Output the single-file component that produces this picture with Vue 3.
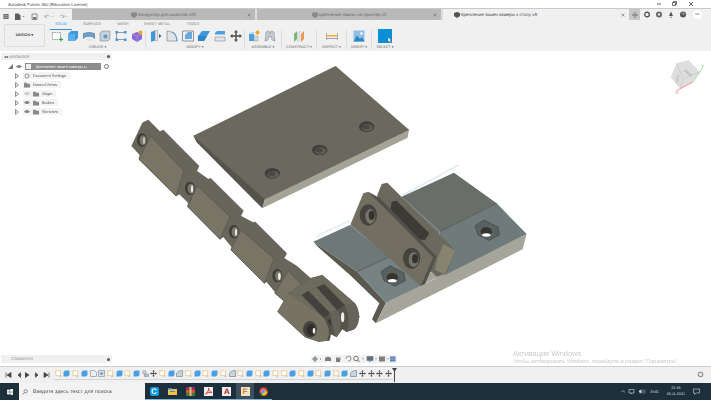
<template>
  <div class="app">
    <svg class="defs" width="0" height="0">
      <defs>
        <symbol id="sketch" viewBox="0 0 12 12">
          <path d="M1.500 2.500h8v7h-8z" fill="#fff" stroke="#777" stroke-width=".7" stroke-dasharray="1.500 .7" />
          <path d="M8 9.500h4M10 7.500v4" stroke="#2aa84a" stroke-width="1.200" />
        </symbol>
        <symbol id="extrude" viewBox="0 0 12 12">
          <path d="M1 4l3-3h7v7l-3 3H1z" fill="#3f97dc" />
          <path d="M1 4h7v7H1z" fill="#5bb0ec" />
        </symbol>
        <symbol id="revolve" viewBox="0 0 12 12">
          <path d="M0 4c2-2 10-2 12 0v5c-1-2-3-2.500-6-2.500S1 7 0 9z" fill="#6c9fcb" stroke="#4a6c8c" stroke-width=".5" />
          <ellipse cx="6" cy="9.500" rx="3.500" ry="1.500" fill="#dfe6ec" />
        </symbol>
        <symbol id="hole" viewBox="0 0 12 12">
          <path d="M1 3l2-2h8v8l-2 2H1z" fill="#c5ccd2" stroke="#7b858d" stroke-width=".5" />
          <circle cx="6.500" cy="6.500" r="2.700" fill="#6a9bc4" stroke="#fff" stroke-width=".6" />
        </symbol>
        <symbol id="lines" viewBox="0 0 12 12">
          <path d="M1.500 2.500h9M1.500 2.500v8M10.500 9.500h-8" fill="none" stroke="#55626c" stroke-width=".6" />
          <rect x=".5" y="1" width="2.500" height="2.500" fill="#3f97dc" />
          <rect x="9" y="1" width="2.500" height="2.500" fill="#3f97dc" />
          <rect x=".5" y="8.500" width="2.500" height="2.500" fill="#3f97dc" />
          <rect x="9" y="8.500" width="2.500" height="2.500" fill="#3f97dc" />
        </symbol>
        <symbol id="purple" viewBox="0 0 12 12">
          <path d="M1 4l5-2 5 2v5l-5 3-5-3z" fill="#8c6bd6" />
          <path d="M1 4l5 2 5-2M6 6v6" fill="none" stroke="#b7a2ea" stroke-width=".5" />
          <circle cx="9.500" cy="2.500" r="2" fill="#f3a51f" />
        </symbol>
        <symbol id="press" viewBox="0 0 12 12">
          <path d="M1 2l4-1.500v10L1 12z" fill="#3f97dc" />
          <path d="M5 .5h2.500v10H5z" fill="#dfe6ec" stroke="#6d7a84" stroke-width=".4" />
          <path d="M9 4l2.500 2L9 8z" fill="#4a5660" />
        </symbol>
        <symbol id="fillet" viewBox="0 0 12 12">
          <path d="M1 11V1c5 0 10 4 10 10z" fill="#dfe4e8" stroke="#6d7a84" stroke-width=".6" />
          <path d="M6 1.800c3 1 4.500 4 5 9.200" fill="none" stroke="#3f97dc" stroke-width=".9" />
        </symbol>
        <symbol id="chamfer" viewBox="0 0 12 12">
          <path d="M.500 1h11v10H.500z" fill="#eef1f3" stroke="#65717a" stroke-width=".7" />
          <path d="M3 9V5l3-3h4v7z" fill="#6aa9dc" />
        </symbol>
        <symbol id="shell" viewBox="0 0 12 12">
          <path d="M0 6l4-5h8l-3 5-3 5H0z" fill="#3f97dc" />
          <path d="M0 6h9l-3 5H0z" fill="#2f84c8" />
        </symbol>
        <symbol id="combine" viewBox="0 0 12 12">
          <path d="M1 3l2-2h8v3.500H1z" fill="#4aa0e0" />
          <path d="M1 7h10v4H1z" fill="#dfe4e8" stroke="#6d7a84" stroke-width=".5" />
        </symbol>
        <symbol id="move" viewBox="0 0 12 12">
          <path d="M6 0l2 2.500H6.700v2.800h2.800V4L12 6 9.500 8V6.700H6.700v2.800H8L6 12 4 9.500h1.300V6.700H2.500V8L0 6l2.500-2v1.300h2.800V2.500H4z" fill="#4c4c4c" />
        </symbol>
        <symbol id="assemble" viewBox="0 0 12 12">
          <path d="M1 4h5v7H1z" fill="#4aa0e0" />
          <path d="M6 6h4v5H6z" fill="#d4dbe0" stroke="#7c8890" stroke-width=".4" />
          <path d="M1 4l2-2h3v2z" fill="#bcd8ee" />
          <circle cx="9.500" cy="2.500" r="2" fill="#f3a51f" />
        </symbol>
        <symbol id="joint" viewBox="0 0 12 12">
          <path d="M1 11l1-9 3-1 1 3 1-3 3 1 1 9-3-1-1-4-1 1-1-1-1 4z" fill="#c3cbd2" stroke="#77838c" stroke-width=".5" />
        </symbol>
        <symbol id="construct" viewBox="0 0 12 12">
          <path d="M1 4l3-3v8l-3 3z" fill="#79b873" />
          <path d="M4.500 3l2.500-2v9l-2.500 2z" fill="#e4e8ea" stroke="#99a" stroke-width=".3" />
          <path d="M8 4l3-3v8l-3 3z" fill="#ea9a53" />
        </symbol>
        <symbol id="inspect" viewBox="0 0 12 12">
          <path d="M.500 3v7M11.500 3v7" stroke="#7a7a7a" stroke-width=".6" />
          <path d="M1 5h10v1.500H1z" fill="#f4ae3a" />
          <path d="M1 8.500h10" stroke="#555" stroke-width=".5" />
        </symbol>
        <symbol id="insert" viewBox="0 0 12 12">
          <path d="M.500.500h11v11H.500z" fill="#8ec0e6" />
          <path d="M.500 11.500l3.500-6 3 3.500 2-2 2.500 4.500z" fill="#2f84c8" />
          <circle cx="8.500" cy="3.500" r="1.200" fill="#fff" />
        </symbol>
        <symbol id="sketchStep" viewBox="0 0 7 7">
          <path d="M.800.800h4.800v4.800H.800z" fill="#fff" stroke="#e7a74a" stroke-width=".7" stroke-dasharray="1.400 .5" />
          <path d="M4.500 6.500l2-.5" stroke="#7fa4c0" stroke-width=".6" />
        </symbol>
        <symbol id="boxStep" viewBox="0 0 7 7">
          <path d="M.500 2l1.500-1.500h4.500v4.500L5 6.500H.500z" fill="#4a9fe0" />
        </symbol>
        <symbol id="cutStep" viewBox="0 0 7 7">
          <path d="M.500.500h4l2 2v4h-6z" fill="#eaf0f4" stroke="#7b8790" stroke-width=".6" />
        </symbol>
        <symbol id="holeStep" viewBox="0 0 7 7">
          <path d="M.500.500h6v6h-6z" fill="#dde3e8" stroke="#7b8790" stroke-width=".6" />
          <circle cx="3.500" cy="3.500" r="1.600" fill="#7aa6c8" />
        </symbol>
        <symbol id="groupStep" viewBox="0 0 7 7">
          <circle cx="2.300" cy="2.300" r="1.800" fill="#cfd6dc" stroke="#78838c" stroke-width=".5" />
          <path d="M2.500 4h4v2.600h-4z" fill="#a9c5da" stroke="#78838c" stroke-width=".5" />
        </symbol>
        <symbol id="filletStep" viewBox="0 0 7 7">
          <path d="M.500 6.500V3C2 1.200 4 .500 6.500.500v6z" fill="#c8d4dc" stroke="#6c7b86" stroke-width=".6" />
        </symbol>
      </defs>
    </svg>

    <header class="titlebar">
      <span class="title">Autodesk Fusion 360 (Education License)</span>
      <svg class="win-btns" width="44" height="8" viewBox="0 0 44 8">
        <path d="M0 4h4" stroke="#333" fill="none" stroke-width=".8" />
        <path d="M15.500 2.500h3v3h-3zM16.500 2.500v-1h3v3h-1" stroke="#333" fill="none" stroke-width=".7" />
        <path d="M32 2l4 4M36 2l-4 4" stroke="#333" fill="none" stroke-width=".8" />
      </svg>
    </header>

    <div class="tabrow">
      <div class="quick">
        <svg width="72" height="11" viewBox="0 0 72 11">
          <path d="M3.500 3h5v5h-5z" fill="#4e4e4e" />
          <path d="M5.200 3v5M6.900 3v5M3.500 4.700h5M3.500 6.400h5" stroke="#e8e8e8" stroke-width=".4" />
          <path d="M15 2.500h3.500l2 2V9H15z" fill="#5c5c5c" />
          <path d="M22.500 5l1 1 1-1z" fill="#666" />
          <path d="M32 3h5v5.500h-5z" fill="none" stroke="#777" stroke-width=".8" />
          <path d="M33 6h3v2.500h-3z" fill="#777" />
          <path d="M45 6c1-2.500 3.500-2.500 4.500-.5M45 4v2.300h2.200" fill="none" stroke="#9a9a9a" stroke-width=".7" />
          <path d="M51.500 5l1 1 1-1z" fill="#aaa" />
          <path d="M64 6c-1-2.500-3.500-2.500-4.500-.5M64 4v2.300h-2.200" fill="none" stroke="#9a9a9a" stroke-width=".7" />
          <path d="M65.500 5l1 1 1-1z" fill="#aaa" />
        </svg>
      </div>
      <div v-for="tab in tabs" :key="tab.name" class="tab" :class="{ active: tab.active }" :style="{ width: tab.w + 'px' }">
        <svg width="6" height="6" viewBox="0 0 6 6"><path d="M0 1l3-1 3 1v3l-3 2-3-2z" :fill="tab.active ? '#555' : '#8a8a8a'" /></svg>
        <span>{{ tab.name }}</span>
        <svg class="tab-x" width="4" height="4" viewBox="0 0 4 4"><path d="M.5.5l3 3M3.500.5l-3 3" stroke="#777" stroke-width=".7" /></svg>
      </div>
      <div class="tab-tools">
        <div class="plus">
          <svg width="6" height="6" viewBox="0 0 6 6"><path d="M3 0v6M0 3h6" stroke="#888" stroke-width="1.300" /></svg>
        </div>
        <svg width="50" height="11" viewBox="0 0 50 11">
          <circle cx="7" cy="5.500" r="2.300" fill="none" stroke="#444" stroke-width="1.200" />
          <circle cx="19" cy="5.500" r="3" fill="#666" />
          <circle cx="19" cy="5.500" r="1.200" fill="#ddd" />
          <path d="M31 2.500l2 4.500h-4zM30.300 7.700h1.400v1h-1.400z" fill="#555" />
          <circle cx="43" cy="5.500" r="3" fill="#555" />
          <path d="M42 4.700c.3-1 2-1 2 0 0 .7-1 .7-1 1.500" fill="none" stroke="#eee" stroke-width=".6" />
        </svg>
        <span class="avatar">MK</span>
      </div>
    </div>

    <div class="ribbon">
      <div class="design">DESIGN ▾</div>
      <div class="ribbon-main">
        <div class="ribbon-tabs">
          <span v-for="(t, i) in ribbonTabs" :key="t.name" class="rtab" :class="{ on: i === 0 }" :style="{ width: t.w + 'px' }">{{ t.name }}</span>
        </div>
        <div class="groups">
          <div v-for="g in groups" :key="g.label" class="group" :style="{ width: g.w + 'px' }">
            <div class="icons" :style="{ paddingLeft: g.pad + 'px' }">
              <svg v-for="ic in g.icons" :key="ic" width="12" height="12"><use :href="'#' + ic" /></svg>
              <div v-if="g.select" class="select-tile">
                <svg width="5" height="6" viewBox="0 0 5 6"><path d="M1 0l3.500 3.500H3l1 2-1 .4-1-2-1 1z" fill="#fff" stroke="#333" stroke-width=".3" /></svg>
              </div>
            </div>
            <span class="group-label">{{ g.label }} ▾</span>
          </div>
        </div>
      </div>
    </div>

    <main class="viewport">
      <svg class="model" width="711" height="400" viewBox="0 0 711 400">
        <!-- top plate, coords taken from a 3x crop -->
        <g transform="translate(185 65) scale(.3333)">
          <path d="M25 212L452 3 672 194 240 402z" fill="#6b685d" />
          <path d="M25 212L240 402 232 430 35 232z" fill="#56534a" />
          <path d="M240 402L672 194 668 218 232 430z" fill="#a3a396" />
          <path d="M25 212L240 402 672 194" fill="none" stroke="#45433c" stroke-width="1.500" />
          <g v-for="h in plateHoles" :key="h.x">
            <ellipse :cx="h.x" :cy="h.y" rx="23" ry="16" fill="#3f3d38" />
            <ellipse :cx="h.x + 2" :cy="h.y + 3" rx="17" ry="11" fill="#5f5d54" />
            <ellipse :cx="h.x - 2" :cy="h.y + 1" rx="11" ry="7" fill="#494740" />
          </g>
        </g>

        <!-- chain of links -->
        <g transform="translate(120 110) scale(.3333)">
          <path d="M35 108L68 38 85 30 120 65 130 60 237 168 230 183 265 208 272 205 370 302 362 318 400 338 405 335 500 430 492 445 530 468 600 530 560 545 495 575 465 550 465 545 440 515 433 520 333 420 335 410 310 380 300 388 203 290 205 278 178 252 168 258 57 148 60 135z" fill="#68655a" stroke="#4c4a43" stroke-width="1.500" />
          <g stroke="#4c4a43" stroke-width="1.500">
            <path d="M57 148L92 78 192 183 168 258z" fill="#797566" />
            <path d="M203 290L232 228 330 320 300 388z" fill="#797566" />
            <path d="M333 420L363 360 462 445 433 520z" fill="#797566" />
            <path d="M465 550L505 482 545 525 495 575z" fill="#797566" />
          </g>
          <g v-for="h in chainHoles" :key="h.x">
            <ellipse :cx="h.x" :cy="h.y" rx="15" ry="20" fill="#3e3c37" />
            <ellipse :cx="h.x + 3" :cy="h.y + 1" rx="10" ry="15" fill="#7a786d" />
            <ellipse :cx="h.x + 6" :cy="h.y + 2" :rx="h.gap" ry="11" fill="#f0f0ea" />
          </g>
        </g>

        <!-- clip end -->
        <g transform="translate(265 260) scale(.3333)">
          <path d="M37 155L70 100 135 55 172 45 270 130 284 170 268 208 245 216 232 208 215 232 196 222 190 242 160 245 120 232z" fill="#55534b" />
          <path d="M70 100L110 105 178 175 120 150z" fill="#6d6a5e" />
          <path d="M110 105L130 92 195 158 178 175z" fill="#43413b" />
          <path d="M130 92L155 82 216 150 195 158z" fill="#6d6a5e" />
          <path d="M155 82L178 72 240 135 216 150z" fill="#43413b" />
          <path d="M178 72L172 45 270 130 240 135z" fill="#6d6a5e" />
          <path d="M70 100L135 55 172 45 178 72 130 92 110 105z" fill="#6d6a5e" />
          <path d="M195 158L216 150C232 170 232 205 215 232 205 222 205 195 195 158z" fill="#66635a" />
          <path d="M240 135L270 130C287 150 287 195 268 208L245 216C255 190 250 160 240 135z" fill="#66635a" />
          <ellipse cx="233" cy="172" rx="5" ry="15" fill="#f0f0ea" />
          <ellipse cx="193" cy="190" rx="4" ry="13" fill="#2e2d29" />
          <path d="M37 155L70 100 178 175 195 215 190 242 160 245 120 232z" fill="#777364" />
          <ellipse cx="135" cy="208" rx="21" ry="25" fill="#45433d" />
          <ellipse cx="138" cy="210" rx="13" ry="17" fill="#2e2d29" />
          <ellipse cx="147" cy="212" rx="4" ry="9" fill="#eeeee8" />
          <path d="M178 170C195 190 200 215 190 242" fill="none" stroke="#4f4d45" stroke-width="6" />
        </g>

        <!-- bracket -->
        <g transform="translate(300 160) scale(.3333)">
          <path d="M50 228L150 182M305 107L475 16" stroke="#dfeef8" stroke-width="5" fill="none" />
          <path d="M40 245L172 335 258 428 228 490 216 478 238 430 150 345 55 262z" fill="#5a584f" />
          <path d="M258 428L680 222 668 268 228 490z" fill="#a5a599" />
          <path d="M150 195L305 110 420 215 385 335 270 290z" fill="#6f7878" />
          <path d="M305 110L462 38 590 130 420 215z" fill="#6a6e69" />
          <path d="M420 215L590 130 680 222 435 345 385 335z" fill="#6f7b7b" />
          <path d="M40 245L150 195 270 290 172 335z" fill="#6f7878" />
          <path d="M172 335L270 290 385 335 362 378 258 428z" fill="#778383" />
          <path d="M362 378L385 335 435 345 400 358z" fill="#a5a599" />
          <path d="M590 130L420 215M172 335L270 290" stroke="#3f403c" stroke-width="2" fill="none" />

          <path d="M232 105L245 72 262 68 467 272 440 340 410 350 232 170z" fill="#6b685d" />
          <path d="M412 295L430 252 467 272 435 343 405 330z" fill="#86836f" />
          <path d="M275 125L290 122 388 220 375 240 345 238 270 160z" fill="#3d3b36" />
          <path d="M205 95L240 115 410 290 375 372 362 378z" fill="#52504a" />
          <path d="M152 192L190 100 205 95 400 292 362 378z" fill="#726e62" />

          <g v-for="h in bracketHoles" :key="h.x">
            <ellipse :cx="h.x" :cy="h.y" rx="26" ry="32" fill="#45433d" />
            <ellipse :cx="h.x + 6" :cy="h.y + 4" rx="15" ry="22" fill="#77746a" />
            <ellipse :cx="h.x + 10" :cy="h.y + 1" rx="9" ry="14" fill="#33322e" />
          </g>

          <g v-for="n in nuts" :key="n.x" :transform="`translate(${n.x} ${n.y})`">
            <path d="M-37-12L-10-30 32-9 36 15 5 31-28 15z" fill="#596160" stroke="#3e4240" stroke-width="2" />
            <ellipse cx="-3" cy="5" rx="17" ry="13" fill="#35352f" />
            <ellipse cx="-3" cy="15" rx="13" ry="5" fill="#fff" />
          </g>
        </g>

        <!-- view cube -->
        <g transform="translate(480 0) scale(.3333)">
          <path d="M572 232L590 190 625 180 660 215 635 250 600 265z" fill="#dedede" />
          <path d="M590 190L610 238 660 215M610 238L600 265" fill="none" stroke="#c6c6c6" stroke-width="2" />
          <path d="M590 272L640 245" stroke="#ef8f8f" stroke-width="3" />
          <path d="M640 245L668 203" stroke="#9fe39f" stroke-width="3" />
          <text x="586" y="282" class="axis axis-x">X</text>
          <text x="663" y="204" class="axis axis-y">Y</text>
          <text transform="translate(612 212) rotate(42)" class="cube-text">BACK</text>
          <text transform="translate(592 248) rotate(-70)" class="cube-text">LEFT</text>
        </g>
      </svg>

      <aside class="browser">
        <div class="panel-head">
          <span class="panel-title"><b>◂◂</b> BROWSER</span>
          <span class="dot"></span>
        </div>
        <div class="root-row">
          <svg width="5" height="5" viewBox="0 0 5 5"><path d="M0 5L5 0v5z" fill="#777" /></svg>
          <svg width="6" height="5" viewBox="0 0 7 5"><path d="M0 2.500C2 0 5 0 7 2.500 5 5 2 5 0 2.500z" fill="#888" /></svg>
          <span class="root-name"><i class="doc"></i>Крепление экшен камеры к...</span>
          <span class="radio"></span>
        </div>
        <div v-for="n in nodes" :key="n.name" class="node">
          <svg width="4" height="6" viewBox="0 0 4 6"><path d="M.5.5L3.500 3 .5 5.500z" fill="#e6e6e6" stroke="#555" stroke-width=".6" /></svg>
          <div class="node-body">
            <svg v-if="n.eye" width="6" height="5" viewBox="0 0 7 5"><path d="M0 2.500C2 0 5 0 7 2.500 5 5 2 5 0 2.500z" :fill="n.dim ? '#ccc' : '#8a8a8a'" /></svg>
            <svg width="6" height="6" viewBox="0 0 7 6">
              <circle v-if="n.gear" cx="3.500" cy="3" r="2.200" fill="none" stroke="#888" stroke-width="1.400" stroke-dasharray="1.100 .4" />
              <path v-else d="M0 .5h3l1 1h3V6H0z" fill="#8a8a8a" />
            </svg>
            <span>{{ n.name }}</span>
          </div>
        </div>
      </aside>

      <div class="watermark">
        <div class="wm-title">Активация Windows</div>
        <div class="wm-sub">Чтобы активировать Windows, перейдите в раздел "Параметры".</div>
      </div>

      <div class="comments">
        <span class="panel-title">COMMENTS</span>
        <span class="dot"></span>
      </div>

      <div class="nav-tools">
        <svg width="86" height="8" viewBox="0 0 86 8">
          <path d="M4 1l3 3-3 3-3-3z" fill="#8a9aa6" />
          <path d="M9 4h1" stroke="#666" />
          <path d="M14 3l3-1.500L20 3v3h-6z" fill="#7d7d7d" />
          <path d="M25 7V2.500h1V4l.8-2h1v2l1-1.500h.8L29 7z" fill="#7d7d7d" />
          <path d="M35 4a2.500 2.500 0 1 1 2 2" fill="none" stroke="#777" stroke-width=".8" />
          <circle cx="45" cy="3.500" r="2.300" fill="none" stroke="#666" stroke-width=".9" />
          <path d="M46.500 5l2 2" stroke="#666" />
          <path d="M51 3.500l1 1 1-1z" fill="#666" />
          <path d="M56 1.500h6v4h-6zM58 6.500h2" fill="#5d7286" stroke="#5d7286" stroke-width=".6" />
          <path d="M64 3.500l1 1 1-1z" fill="#666" />
          <path d="M68 1.500h6v5h-6z" fill="#808080" />
          <path d="M76 3.500l1 1 1-1z" fill="#666" />
          <path d="M79 1.500h5.500v5H79z" fill="#5b83b5" />
          <path d="M79 4h5.500" stroke="#dde" stroke-width=".5" />
        </svg>
      </div>
    </main>

    <div class="timeline">
      <svg class="play" width="48" height="8" viewBox="0 0 48 8">
        <path d="M3 1.500v5M8 1.500l-4 2.500 4 2.500z" fill="#444" stroke="#444" stroke-width=".7" />
        <path d="M15 4l2.500-2.500v5zM15.500 4h3" fill="#444" stroke="#444" stroke-width=".6" />
        <path d="M22 1v6l4.500-3z" fill="#444" />
        <path d="M35 4l-2.500-2.500v5zM34.500 4h-3" fill="#444" stroke="#444" stroke-width=".6" />
        <path d="M41 1.500l4 2.500-4 2.500zM46 1.500v5" fill="#444" stroke="#444" stroke-width=".7" />
      </svg>
      <div class="steps">
        <div v-for="(s, i) in steps" :key="i" class="step">
          <svg width="7" height="7"><use :href="'#' + s" /></svg>
        </div>
      </div>
      <div class="marker">
        <svg width="5" height="4" viewBox="0 0 5 4"><path d="M0 0h5L2.500 4z" fill="#444" /></svg>
      </div>
      <svg class="tl-gear" width="7" height="7" viewBox="0 0 7 7"><circle cx="3.500" cy="3.500" r="2.200" fill="none" stroke="#777" stroke-width="1.300" stroke-dasharray="1.100 .4" /></svg>
    </div>

    <footer class="taskbar">
      <div class="start">
        <svg width="6" height="6" viewBox="0 0 6 6"><path d="M0 .8l2.700-.4v2.400H0zM3.100.3L6 0v2.800H3.100zM0 3.200h2.700v2.400L0 5.200zM3.100 3.200H6V6l-2.900-.4z" fill="#fff" /></svg>
      </div>
      <div class="search">
        <svg width="6" height="6" viewBox="0 0 6 6"><circle cx="3.700" cy="2.300" r="1.700" fill="none" stroke="#555" stroke-width=".6" /><path d="M2.500 3.500L.5 5.500" stroke="#555" stroke-width=".7" /></svg>
        <span>Введите здесь текст для поиска</span>
      </div>
      <div class="apps">
        <div class="app-ic"><span class="tile tile-c">C</span></div>
        <div class="app-ic">
          <svg width="9" height="9" viewBox="0 0 9 9"><path d="M0 2h9v6H0z" fill="#f0c04a" /><path d="M0 1h4v1.500H0zM2 4h5v1H2z" fill="#2d8fd6" /></svg>
        </div>
        <div class="app-ic">
          <svg width="9" height="9" viewBox="0 0 9 9"><path d="M0 0h9v3H0z" fill="#8b2d78" /><path d="M0 3h9v3H0z" fill="#d6552b" /><path d="M0 6h9v3H0z" fill="#3a7a3c" /><path d="M3.500 0h2v9h-2z" fill="#d9c27a" /></svg>
        </div>
        <div class="app-ic">
          <svg width="9" height="9" viewBox="0 0 9 9"><path d="M0 0h9v9H0z" fill="#eee" /><path d="M1.500 7C4 5 5 3 4.500 1c0 2 1.500 4 3.500 4.500C6 5 3.500 5.500 1.500 7z" fill="none" stroke="#d0312d" stroke-width=".9" /></svg>
        </div>
        <div class="app-ic"><span class="tile tile-a">A</span></div>
        <div class="app-ic lit"><span class="tile tile-f">F</span></div>
        <div class="app-ic">
          <svg width="9" height="9" viewBox="0 0 9 9">
            <circle cx="4.500" cy="4.500" r="4.200" fill="#db4437" />
            <path d="M4.500 4.500L1 7 .3 4.500a4.200 4.200 0 0 0 4.200 4.200z" fill="#0f9d58" />
            <path d="M4.500 4.500h4.200a4.200 4.200 0 0 1-4.200 4.200L2.800 8z" fill="#f4b400" />
            <circle cx="4.500" cy="4.500" r="2" fill="#fff" />
            <circle cx="4.500" cy="4.500" r="1.500" fill="#4285f4" />
          </svg>
        </div>
      </div>
      <div class="tray">
        <svg width="26" height="7" viewBox="0 0 26 7">
          <path d="M0 4.500l2-2 2 2" fill="none" stroke="#ddd" stroke-width=".6" />
          <path d="M8 1.500h5v3.500H8zM10.500 5v1.200" fill="none" stroke="#ddd" stroke-width=".6" />
          <path d="M18 2.500h1l1.500-1.300v4.600L19 4.500h-1z" fill="#ddd" />
          <path d="M21.500 2c.7.800.7 2.200 0 3M23 1.200c1.200 1.400 1.200 3.200 0 4.600" fill="none" stroke="#ddd" stroke-width=".5" />
        </svg>
        <span class="lang">ENG</span>
        <div class="clock"><div>22:48</div><div>05.11.2021</div></div>
        <svg width="7" height="7" viewBox="0 0 7 7"><path d="M.5 1h6v4H3L1.500 6.300V5h-1z" fill="none" stroke="#ddd" stroke-width=".6" /></svg>
      </div>
    </footer>
  </div>
</template>

<script setup>
const tabs = [
  { name: 'Кондуктор для шкантов v20', w: 185 },
  { name: 'крепление лампы на принтер v2', w: 186 },
  { name: 'Крепление экшен камеры к столу v9', w: 186, active: true }
]
const ribbonTabs = [
  { name: 'SOLID', w: 22 },
  { name: 'SURFACE', w: 40 },
  { name: 'MESH', w: 22 },
  { name: 'SHEET METAL', w: 46 },
  { name: 'TOOLS', w: 26 }
]
const groups = [
  { label: 'CREATE', w: 96, pad: 1, icons: ['sketch', 'extrude', 'revolve', 'hole', 'lines', 'purple'] },
  { label: 'MODIFY', w: 99, pad: 4, icons: ['press', 'fillet', 'chamfer', 'shell', 'combine', 'move'] },
  { label: 'ASSEMBLE', w: 37, pad: 3, icons: ['assemble', 'joint'] },
  { label: 'CONSTRUCT', w: 35, pad: 0, icons: ['construct'] },
  { label: 'INSPECT', w: 30, pad: 0, icons: ['inspect'] },
  { label: 'INSERT', w: 25, pad: 0, icons: ['insert'] },
  { label: 'SELECT', w: 26, pad: 0, icons: [], select: true }
]
const nodes = [
  { name: 'Document Settings', gear: true },
  { name: 'Named Views' },
  { name: 'Origin', eye: true, dim: true },
  { name: 'Bodies', eye: true },
  { name: 'Sketches', eye: true }
]
const plateHoles = [
  { x: 262, y: 325 },
  { x: 404, y: 255 },
  { x: 545, y: 185 }
]
const chainHoles = [
  { x: 66, y: 90, gap: 2 },
  { x: 210, y: 235, gap: 3 },
  { x: 342, y: 365, gap: 3 },
  { x: 472, y: 497, gap: 4 }
]
const bracketHoles = [
  { x: 205, y: 165 },
  { x: 335, y: 295 }
]
const nuts = [
  { x: 280, y: 347 },
  { x: 562, y: 210 }
]
const key = {
  s: 'sketchStep', b: 'boxStep', c: 'cutStep', h: 'holeStep',
  g: 'groupStep', m: 'move', f: 'filletStep'
}
const steps = 'sbsbchsbsbgmsbfsbsbsfsbsbssbsbsbsbfmmmm'.split('').map(c => key[c])
</script>

<style>
html, body { margin: 0; background: #fff; }
</style>

<style scoped>
.app {
  width: 711px;
  height: 400px;
  display: flex;
  flex-direction: column;
  overflow: hidden;
  font-family: "Liberation Sans", Arial, sans-serif;
  color: #666;
  text-rendering: geometricPrecision;
  filter: blur(.3px);
}
.defs { position: absolute; }
.titlebar {
  height: 8px;
  flex: none;
  display: flex;
  justify-content: space-between;
  align-items: center;
  padding-left: 8px;
  background: #fff;
}
.title { font-size: 4.300px; color: #444; }
.win-btns { margin-right: 10px; }
.tabrow {
  height: 12px;
  flex: none;
  display: flex;
  box-sizing: border-box;
  background: #f0f0f0;
  border-top: 1px solid #c9c9c9;
}
.quick { width: 72px; flex: none; }
.tab {
  flex: none;
  box-sizing: border-box;
  display: flex;
  align-items: center;
  justify-content: center;
  gap: 1px;
  background: #b9b9b9;
  border-right: 2px solid #dcdcdc;
  font-size: 4.500px;
  color: #6a6a6a;
  position: relative;
  white-space: nowrap;
}
.tab.active {
  background: #f0f0f0;
  color: #444;
  justify-content: flex-start;
  padding-left: 11px;
  border-right: 0;
}
.tab-x { position: absolute; right: 4px; }
.tab-tools { flex: 1; display: flex; align-items: center; }
.plus {
  width: 11px;
  height: 11px;
  background: #c6c6c6;
  display: flex;
  align-items: center;
  justify-content: center;
}
.avatar {
  width: 9px;
  height: 9px;
  margin-left: 3px;
  border-radius: 50%;
  background: #fff;
  font-size: 3px;
  line-height: 9px;
  text-align: center;
}
.ribbon { height: 31px; flex: none; display: flex; background: #f0f0f0; padding-left: 4px; }
.design {
  width: 41px;
  height: 23px;
  margin-top: 4px;
  box-sizing: border-box;
  border: 1px solid #dcdcdc;
  border-radius: 2px;
  font-size: 3.800px;
  line-height: 21px;
  text-align: center;
  font-weight: 700;
  color: #444;
}
.ribbon-main { margin-left: 5px; }
.ribbon-tabs { display: flex; height: 10px; font-size: 3.800px; align-items: stretch; }
.rtab { text-align: center; line-height: 8px; color: #777; flex: none; box-sizing: border-box; }
.rtab.on { color: #3a8fd0; border-bottom: 1px solid #3a8fd0; height: 10px; }
.groups { display: flex; }
.group {
  flex: none;
  height: 19px;
  box-sizing: border-box;
  border-right: 1px solid #dcdcdc;
  display: flex;
  flex-direction: column;
  align-items: center;
}
.group:last-child { border-right: 0; }
.icons { display: flex; gap: 4px; height: 12px; align-self: stretch; justify-content: center; }
.group:nth-child(-n+3) .icons { justify-content: flex-start; }
.select-tile {
  width: 14px;
  height: 14px;
  margin-top: -1px;
  background: #0a8fd6;
  display: flex;
  align-items: flex-end;
  justify-content: flex-end;
}
.group-label { font-size: 3.700px; margin-top: 3px; white-space: nowrap; color: #666; }
.viewport { flex: 1; position: relative; background: #fff; }
.model { position: absolute; left: 0; top: -51px; pointer-events: none; }
.axis { font-size: 14px; font-family: "Liberation Sans", sans-serif; }
.axis-x { fill: #e77; }
.axis-y { fill: #7c7; }
.cube-text { font-size: 10px; fill: #999; font-family: "Liberation Sans", sans-serif; }
.browser { position: absolute; left: 1px; top: 2px; width: 111px; font-size: 3.900px; }
.panel-head {
  height: 7px;
  background: #f0f0f0;
  display: flex;
  align-items: center;
  justify-content: space-between;
  padding: 0 2px 0 3px;
  margin-bottom: 3px;
}
.panel-title { font-size: 3.800px; color: #888; }
.panel-title b { color: #444; margin-right: 1px; }
.dot { width: 3px; height: 3px; border-radius: 50%; background: #555; }
.root-row { display: flex; align-items: center; gap: 3px; height: 7px; padding-left: 7px; margin-bottom: 1px; }
.root-name {
  width: 76px;
  height: 7px;
  box-sizing: border-box;
  background: #8c8c8c;
  color: #fff;
  display: flex;
  align-items: center;
  white-space: nowrap;
  overflow: hidden;
}
.doc { width: 5px; height: 5px; margin: 0 5px 0 1px; background: #eee; flex: none; }
.radio { width: 5px; height: 5px; border-radius: 50%; border: 1px solid #777; box-sizing: border-box; }
.node { display: flex; align-items: center; height: 9px; padding-left: 14px; gap: 4px; }
.node-body {
  display: flex;
  align-items: center;
  gap: 3px;
  height: 7px;
  padding: 0 4px 0 1px;
  background: #f4f4f4;
  color: #555;
  white-space: nowrap;
}
.watermark { position: absolute; left: 513px; top: 298px; color: #c9c9c9; white-space: nowrap; }
.wm-title { font-size: 7.400px; line-height: 9px; }
.wm-sub { font-size: 5.500px; line-height: 7px; margin-top: 1px; }
.comments {
  position: absolute;
  left: 1px;
  top: 304px;
  width: 111px;
  height: 8px;
  box-sizing: border-box;
  padding: 0 2px 0 10px;
  background: #f0f0f0;
  display: flex;
  align-items: center;
  justify-content: space-between;
}
.nav-tools { position: absolute; left: 311px; top: 304px; height: 8px; background: #f2f2f2; display: flex; }
.timeline {
  height: 17px;
  flex: none;
  box-sizing: border-box;
  display: flex;
  align-items: center;
  background: #f0f0f0;
  border-top: 1px solid #cfcfcf;
  position: relative;
}
.play { margin-left: 3px; flex: none; }
.steps { display: flex; margin-left: 3px; }
.step {
  width: 8.700px;
  height: 10px;
  flex: none;
  box-sizing: border-box;
  padding-left: .800px;
  border-bottom: 1px solid #d4d4d4;
}
.step svg { display: block; }
.marker {
  width: 1px;
  height: 14px;
  margin-left: 1px;
  background: #444;
  display: flex;
  justify-content: center;
}
.marker svg { flex: none; }
.tl-gear { position: absolute; left: 697px; top: 4px; }
.taskbar {
  height: 17px;
  flex: none;
  display: flex;
  align-items: center;
  background: #1c2f3b;
  color: #ddd;
  font-size: 4px;
}
.start { width: 19px; height: 17px; display: flex; align-items: center; justify-content: center; flex: none; }
.search {
  width: 126px;
  height: 17px;
  flex: none;
  box-sizing: border-box;
  background: #f3f3f3;
  color: #555;
  display: flex;
  align-items: center;
  gap: 5px;
  padding-left: 3px;
  font-size: 5.300px;
  white-space: nowrap;
}
.apps { display: flex; flex: 1; }
.app-ic {
  width: 18.200px;
  height: 17px;
  box-sizing: border-box;
  border-bottom: 1px solid #7db6d8;
  display: flex;
  align-items: center;
  justify-content: center;
  flex: none;
}
.app-ic.lit { background: #3d4f5a; }
.tile {
  width: 9px;
  height: 9px;
  display: block;
  text-align: center;
  font-size: 8px;
  line-height: 9px;
  font-weight: 700;
}
.tile-c { background: #0a9ade; color: #fff; border-radius: 2px; }
.tile-a { background: #eee; color: #b3262a; }
.tile-f { background: #f4e3c6; color: #d9822b; }
.tray { display: flex; align-items: center; gap: 4px; padding-right: 11px; }
.lang { font-size: 3.800px; }
.clock { text-align: center; font-size: 3.700px; line-height: 5.500px; margin: 0 4px; }
</style>
